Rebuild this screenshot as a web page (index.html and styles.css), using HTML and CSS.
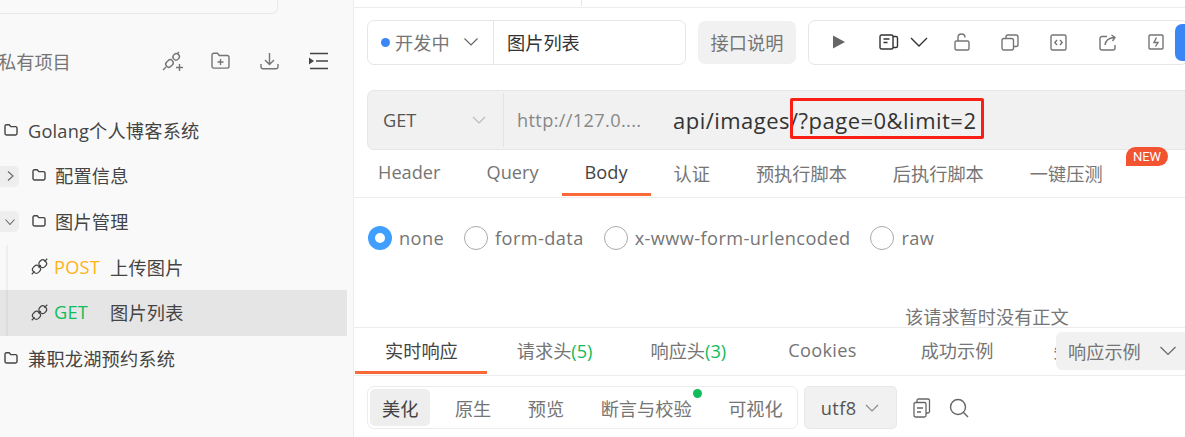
FILE: index.html
```html
<!DOCTYPE html>
<html lang="zh-CN">
<head>
    <meta charset="UTF-8">
    <title>图片列表</title>
    <link rel="stylesheet" href="styles.css">
</head>
<body>
    <svg class="defs">
        <symbol id="folder" viewBox="0 0 16 16"><path d="M2 4.200c0-.8.6-1.400 1.400-1.400h2.800l1.600 1.800h4.800c.8 0 1.400.6 1.400 1.400v5.600c0 .8-.6 1.400-1.400 1.400H3.400c-.8 0-1.400-.6-1.400-1.400z" fill="none" stroke="currentColor" stroke-width="1.400"/></symbol>
        <symbol id="plug" viewBox="0 0 18 18"><g fill="none" stroke="currentColor" stroke-width="1.300"><path d="M.8 17.200l3-3M14.200 3.800l3-3"/><rect x="1.800" y="8.200" width="8" height="7.600" rx="3.200" transform="rotate(-45 5.800 12)"/><rect x="8.600" y="2.200" width="7.600" height="7.600" rx="3.200" transform="rotate(-45 12.400 6)"/><path d="M8 10l2.400-2.400"/></g></symbol>
    </svg>

    <aside class="sidebar">
        <div class="search-box"></div>
        <div class="side-head">
            <span class="side-title">私有项目</span>
            <div class="side-icons">
                <svg class="add-plug" width="22" height="20" viewBox="0 0 22 20" fill="none" stroke="#757575" stroke-width="1.400"><path d="M1 19l3-3M15 3l2-2"/><rect x="3.500" y="9.500" width="8" height="6" rx="3" transform="rotate(-45 7.500 12.500)"/><rect x="11" y="3" width="6.500" height="6" rx="3" transform="rotate(-45 14 6)"/><path d="M14 16.500h7M17.500 13v7"/></svg>
                <svg width="19" height="18" viewBox="0 0 19 18" fill="none" stroke="#757575" stroke-width="1.400"><path d="M1 3c0-1.100.8-1.800 1.800-1.800h3.700l1.800 2.300h7.900c1 0 1.800.8 1.800 1.800v9c0 1-.8 1.800-1.800 1.800H2.800c-1 0-1.800-.8-1.800-1.800zM9.500 7v6M6.500 10h6"/></svg>
                <svg width="19" height="18" viewBox="0 0 19 18" fill="none" stroke="#757575" stroke-width="1.400"><path d="M9.500 1v11M5 8l4.500 4.500L14 8M1 12v3c0 1 .7 1.700 1.700 1.700h13.600c1 0 1.700-.7 1.700-1.700v-3"/></svg>
                <svg width="19" height="18" viewBox="0 0 19 18" fill="none" stroke="#444" stroke-width="1.500"><path d="M1 1.500h18M7 9h12M1 16.500h18"/><path d="M0 5.500l5 3.500-5 3.500z" fill="#444" stroke="none"/></svg>
            </div>
        </div>
        <ul class="tree">
            <li class="tree-row">
                <svg class="folder folder-top"><use href="#folder"/></svg>
                <span>Golang个人博客系统</span>
            </li>
            <li class="tree-row">
                <span class="caret"><svg width="10" height="12" viewBox="0 0 10 12" fill="none" stroke="#666" stroke-width="1.100"><path d="M3 1.500l5 4.500-5 4.500"/></svg></span>
                <svg class="folder"><use href="#folder"/></svg>
                <span>配置信息</span>
            </li>
            <li class="tree-row">
                <span class="caret"><svg width="12" height="10" viewBox="0 0 12 10" fill="none" stroke="#666" stroke-width="1.100"><path d="M1.500 2.500L6 7.500l4.500-5"/></svg></span>
                <svg class="folder"><use href="#folder"/></svg>
                <span>图片管理</span>
            </li>
            <li class="tree-row api-row">
                <svg class="plug"><use href="#plug"/></svg>
                <span class="method post">POST</span>
                <span>上传图片</span>
            </li>
            <li class="tree-row api-row selected">
                <svg class="plug"><use href="#plug"/></svg>
                <span class="method get">GET</span>
                <span>图片列表</span>
            </li>
            <li class="tree-row">
                <svg class="folder folder-top"><use href="#folder"/></svg>
                <span>兼职龙湖预约系统</span>
            </li>
        </ul>
    </aside>

    <main class="main">
        <div class="top-strip"><div class="strip-tick"></div></div>

        <div class="toolbar">
            <div class="name-group">
                <div class="status">
                    <i class="dot"></i>
                    <span>开发中</span>
                    <svg width="16" height="10" viewBox="0 0 16 10" fill="none" stroke="#666" stroke-width="1.200"><path d="M1.500 1.500L8 8l6.500-6.500"/></svg>
                </div>
                <div class="api-name">图片列表</div>
            </div>
            <div class="doc-btn">接口说明</div>
            <div class="tool-group">
                <svg class="t-play" width="14" height="16" viewBox="0 0 14 16"><path d="M1 1.500v13L13 8z" fill="#666"/></svg>
                <svg class="t-book" width="20" height="16" viewBox="0 0 20 16" fill="none" stroke="#333" stroke-width="1.400"><rect x="1" y="1" width="13" height="14" rx="1.500"/><path d="M4.500 5h6M4.500 8.500h4M14 2.500h3c1 0 1.500.5 1.500 1.500v8c0 1-.5 1.500-1.500 1.500h-3"/></svg>
                <svg class="t-chev" width="20" height="12" viewBox="0 0 20 12" fill="none" stroke="#333" stroke-width="1.400"><path d="M2 2l8 8 8-8"/></svg>
                <svg class="t-lock" width="16" height="18" viewBox="0 0 16 18" fill="none" stroke="#757575" stroke-width="1.400"><rect x="1" y="8" width="14" height="9" rx="1.500"/><path d="M4 8V4.500C4 2.500 5.500 1 7.500 1S11 2.500 11 4.500"/></svg>
                <svg class="t-copy" width="18" height="17" viewBox="0 0 18 17" fill="none" stroke="#757575" stroke-width="1.400"><rect x="1" y="4.500" width="11.500" height="11.500" rx="2"/><path d="M5 4.500V3c0-1.100.9-2 2-2h8c1.100 0 2 .9 2 2v7.500c0 1.100-.9 2-2 2h-2.500"/></svg>
                <svg class="t-code" width="17" height="17" viewBox="0 0 17 17" fill="none" stroke="#757575" stroke-width="1.400"><rect x="1" y="1" width="15" height="15" rx="1.500"/><path d="M7 6L4.800 8.500 7 11M10 6l2.200 2.500L10 11"/></svg>
                <svg class="t-share" width="18" height="17" viewBox="0 0 18 17" fill="none" stroke="#757575" stroke-width="1.400"><path d="M8 2.500H3C2 2.500 1 3.300 1 4.500V14c0 1.200 1 2 2 2h11c1.100 0 2-.8 2-2v-3M6 11c.5-4 3.500-7 9-7.500M12.500 1l3.500 2.500-2.500 3.500"/></svg>
                <svg class="t-bolt" width="16" height="16" viewBox="0 0 16 16" fill="none" stroke="#757575" stroke-width="1.400"><rect x="1" y="1" width="14" height="14" rx="1"/><path d="M8.500 3.500L6 8.500h4L7.500 12.500"/></svg>
            </div>
            <div class="send-btn"></div>
        </div>

        <div class="url-bar">
            <div class="method-select">
                <span>GET</span>
                <svg width="14" height="9" viewBox="0 0 14 9" fill="none" stroke="#bbb" stroke-width="1.200"><path d="M1 1l6 6 6-6"/></svg>
            </div>
            <div class="base-url">http://127.0....</div>
            <div class="url-path">api/images/?page=0&amp;limit=2</div>
            <div class="red-box"></div>
        </div>

        <div class="tabs req-tabs">
            <div class="tab">Header</div>
            <div class="tab">Query</div>
            <div class="tab active">Body</div>
            <div class="tab">认证</div>
            <div class="tab">预执行脚本</div>
            <div class="tab">后执行脚本</div>
            <div class="tab">一键压测</div>
            <div class="new-badge">NEW</div>
        </div>

        <div class="body-pane">
            <div class="radios">
                <label class="radio checked"><i></i>none</label>
                <label class="radio"><i></i>form-data</label>
                <label class="radio"><i></i>x-www-form-urlencoded</label>
                <label class="radio"><i></i>raw</label>
            </div>
            <div class="no-body">该请求暂时没有正文</div>
        </div>

        <div class="tabs res-tabs">
            <div class="tab active">实时响应</div>
            <div class="tab tab-head">请求头<b>(5)</b></div>
            <div class="tab tab-head">响应头<b>(3)</b></div>
            <div class="tab tab-cookies">Cookies</div>
            <div class="tab">成功示例</div>
            <div class="tab tab-cut">失败示例</div>
            <div class="example-select">
                <span>响应示例</span>
                <svg width="18" height="10" viewBox="0 0 18 10" fill="none" stroke="#666" stroke-width="1.200"><path d="M1.500 1L9 8.500 16.500 1"/></svg>
            </div>
        </div>

        <div class="res-tools">
            <div class="segments">
                <div class="seg active">美化</div>
                <div class="seg">原生</div>
                <div class="seg">预览</div>
                <div class="seg seg-dot">断言与校验</div>
                <div class="seg">可视化</div>
            </div>
            <div class="charset">
                <span>utf8</span>
                <svg width="14" height="8" viewBox="0 0 14 8" fill="none" stroke="#888" stroke-width="1.100"><path d="M1 1l6 6 6-6"/></svg>
            </div>
            <svg class="res-copy" width="18" height="20" viewBox="0 0 18 20" fill="none" stroke="#666" stroke-width="1.300"><rect x="1" y="4.500" width="12" height="14.500" rx="1.500"/><path d="M4 4.500V2.500C4 1.600 4.600 1 5.500 1h9.500c1 0 1.500.6 1.500 1.500v11c0 1-.5 1.500-1.500 1.500H13M4 10h6M4 14h4"/></svg>
            <svg class="res-search" width="20" height="20" viewBox="0 0 20 20" fill="none" stroke="#666" stroke-width="1.400"><circle cx="9" cy="9" r="7.500"/><path d="M14.500 14.500L19 19"/></svg>
        </div>
    </main>
</body>
</html>
```

FILE: styles.css
```css
* {
    box-sizing: border-box;
}

html, body {
    margin: 0;
    height: 437px;
    overflow: hidden;
}

body {
    display: flex;
    font-family: "Open Sans", "Noto Sans CJK SC", sans-serif;
    font-size: 18.2px;
    color: #444;
    background: #fff;
}

.defs {
    display: none;
}

/* 左侧项目树 */
.sidebar {
    width: 354px;
    flex: none;
    height: 437px;
    background: #f9f9f9;
    border-right: 1px solid #ececec;
    overflow: hidden;
}

.search-box {
    width: 278px;
    height: 14px;
    border: 1px solid #e8e8e8;
    border-top: 0;
    border-left: 0;
    border-radius: 0 0 6px 0;
}

.side-head {
    display: flex;
    justify-content: space-between;
    align-items: center;
    height: 26px;
    margin-top: 34px;
    margin-left: -2px;
    padding-right: 25px;
}

.side-title {
    color: #757575;
}

.side-icons {
    display: flex;
    align-items: center;
    gap: 30px;
}

.add-plug {
    margin-right: -3px;
}

.tree {
    list-style: none;
    margin: 34px 0 0;
    padding: 0;
    width: 347px;
}

.tree-row {
    display: flex;
    align-items: center;
    height: 45.6px;
    padding-left: 31px;
    padding-bottom: 2px;
    color: #444;
    letter-spacing: .2px;
    white-space: nowrap;
    position: relative;
}

.tree-row > span:last-child {
    margin-left: 8px;
}

.folder {
    width: 16px;
    height: 16px;
    color: #444;
    flex: none;
}

.folder-top {
    margin-left: -28px;
    margin-right: 1px;
}

.caret {
    position: absolute;
    left: -8px;
    top: 12px;
    width: 27px;
    height: 21px;
    padding-left: 8px;
    display: flex;
    align-items: center;
    justify-content: center;
    background: #eeeeee;
    border-radius: 5px;
}

.api-row::before {
    content: "";
    position: absolute;
    left: 6px;
    top: 0;
    bottom: 0;
    width: 2px;
    background: #eeeeee;
}

.plug {
    width: 17px;
    height: 17px;
    color: #444;
    flex: none;
}

.method {
    width: 48px;
    margin-left: 6px;
    flex: none;
}

.post {
    color: #ffb31a;
}

.get {
    color: #12bb5b;
}

.selected {
    background: #e5e5e5;
}

.selected::before {
    background: #dcdcdc;
}

/* 右侧主区域 */
.main {
    flex: 1;
    min-width: 0;
    overflow: hidden;
}

.top-strip {
    height: 8px;
    border-bottom: 1px solid #ececec;
}

.strip-tick {
    width: 1px;
    height: 6px;
    margin-left: 227px;
    background: #e4e4e4;
}

.toolbar {
    display: flex;
    align-items: center;
    height: 44px;
    margin-top: 12px;
    padding-left: 13px;
}

.name-group {
    display: flex;
    flex: none;
    width: 319px;
    height: 45px;
    border: 1px solid #e6e6e6;
    border-radius: 7px;
}

.status {
    display: flex;
    align-items: center;
    width: 126px;
    padding-left: 13px;
    border-right: 1px solid #e6e6e6;
    color: #757575;
}

.dot {
    width: 9px;
    height: 9px;
    margin-right: 5px;
    border-radius: 50%;
    background: #3b86f6;
}

.status svg {
    margin-left: 13px;
}

.api-name {
    display: flex;
    align-items: center;
    padding-left: 13px;
    color: #333;
}

.doc-btn {
    display: flex;
    flex: none;
    align-items: center;
    justify-content: center;
    width: 98px;
    height: 43px;
    margin-left: 12px;
    border-radius: 7px;
    background: #f1f1f1;
    color: #757575;
}

.tool-group {
    display: flex;
    align-items: center;
    flex: none;
    width: 380px;
    height: 45px;
    margin-left: 12px;
    border: 1px solid #e6e6e6;
    border-radius: 7px;
    padding-left: 23px;
}

.t-book {
    margin-left: 33px;
}

.t-chev {
    margin-left: 10px;
}

.t-lock {
    margin-left: 25px;
}

.t-copy {
    margin-left: 31px;
}

.t-code {
    margin-left: 31px;
}

.t-share {
    margin-left: 32px;
}

.t-bolt {
    margin-left: 31px;
}

.send-btn {
    flex: none;
    width: 40px;
    height: 37px;
    margin-left: -13px;
    border-radius: 7px 0 0 7px;
    background: #3b86f6;
    position: relative;
}

.url-bar {
    display: flex;
    align-items: center;
    height: 60px;
    margin: 26px 0 0 13px;
    background: #f1f1f1;
    border: 1px solid #e6e6e6;
    border-right: 0;
    border-radius: 7px 0 0 7px;
    position: relative;
}

.method-select {
    display: flex;
    flex: none;
    align-items: center;
    justify-content: space-between;
    width: 136px;
    height: 54px;
    padding: 0 17px 0 15px;
    border-right: 1px solid #e4e4e4;
    color: #555;
}

.base-url {
    flex: none;
    width: 169px;
    padding-left: 13px;
    letter-spacing: .35px;
    color: #888;
}

.url-path {
    font-size: 22px;
    letter-spacing: .48px;
    color: #333;
    white-space: nowrap;
}

.red-box {
    position: absolute;
    left: 422px;
    top: 7px;
    width: 194px;
    height: 41px;
    border: 3px solid #fa1f14;
    border-radius: 2px;
}

.tabs {
    display: flex;
    padding-left: 1px;
    position: relative;
    white-space: nowrap;
}

.tab {
    padding: 0 23px;
    color: #757575;
}

.tab b {
    font-weight: 400;
    color: #12bb5b;
}

.tab.active {
    color: #444;
    border-bottom: 3px solid #f96a38;
}

.req-tabs {
    height: 48px;
    padding-top: 10px;
    border-bottom: 1px solid #ececec;
}

.req-tabs .tab.active {
    height: 36px;
}

.new-badge {
    position: absolute;
    left: 772px;
    top: -3px;
    width: 42px;
    height: 19px;
    border-radius: 10px 10px 10px 0;
    background: #f25330;
    color: #fff;
    font-family: "Roboto", sans-serif;
    font-size: 13px;
    line-height: 19px;
    text-align: center;
}

.body-pane {
    height: 129px;
    position: relative;
}

.radios {
    display: flex;
    padding: 28px 0 0 14px;
    letter-spacing: .4px;
}

.radio {
    display: flex;
    align-items: center;
    margin-right: 20px;
    color: #757575;
}

.radio i {
    width: 24px;
    height: 24px;
    margin-right: 7px;
    border: 1px solid #aaa;
    border-radius: 50%;
}

.radio.checked i {
    border: 7px solid #409eff;
}

.no-body {
    position: absolute;
    left: 551px;
    top: 106px;
    line-height: 26px;
    color: #757575;
}

.res-tabs {
    height: 49px;
    padding-top: 9px;
    border-top: 1px solid #ececec;
    border-bottom: 1px solid #ececec;
}

.res-tabs .tab {
    padding: 0 30px;
}

.res-tabs .tab.active {
    height: 37px;
    padding-right: 29px;
}

.res-tabs .tab-head {
    padding-right: 28px;
}

.res-tabs .tab-cookies {
    padding: 1px 34px 0;
    letter-spacing: .3px;
}

.res-tabs .tab-cut {
    width: 33px;
    padding-right: 0;
    overflow: hidden;
}

.example-select {
    position: absolute;
    left: 702px;
    top: 4px;
    display: flex;
    align-items: center;
    width: 129px;
    height: 38px;
    padding-left: 12px;
    gap: 18px;
    border-radius: 6px 0 0 6px;
    background: #f1f1f1;
    color: #757575;
}

.res-tools {
    display: flex;
    align-items: center;
    height: 43px;
    margin: 10px 0 0 13px;
}

.segments {
    display: flex;
    flex: none;
    align-items: center;
    gap: 12.5px;
    height: 43px;
    padding: 0 2px;
    border: 1px solid #ececec;
    border-radius: 7px;
}

.seg {
    display: flex;
    align-items: center;
    height: 37px;
    padding: 0 12px;
    border-radius: 5px;
    color: #757575;
    position: relative;
}

.seg.active {
    background: #eeeeee;
    color: #444;
}

.seg-dot::after {
    content: "";
    position: absolute;
    right: 2px;
    top: 0;
    width: 9px;
    height: 9px;
    border-radius: 50%;
    background: #12bb5b;
}

.charset {
    display: flex;
    flex: none;
    align-items: center;
    gap: 9px;
    width: 93px;
    height: 43px;
    margin-left: 6px;
    padding-left: 16px;
    letter-spacing: .4px;
    background: #f1f1f1;
    border: 1px solid #e8e8e8;
    border-radius: 5px;
    color: #555;
}

.res-copy {
    margin-left: 16px;
}

.res-search {
    margin-left: 18px;
}
```
